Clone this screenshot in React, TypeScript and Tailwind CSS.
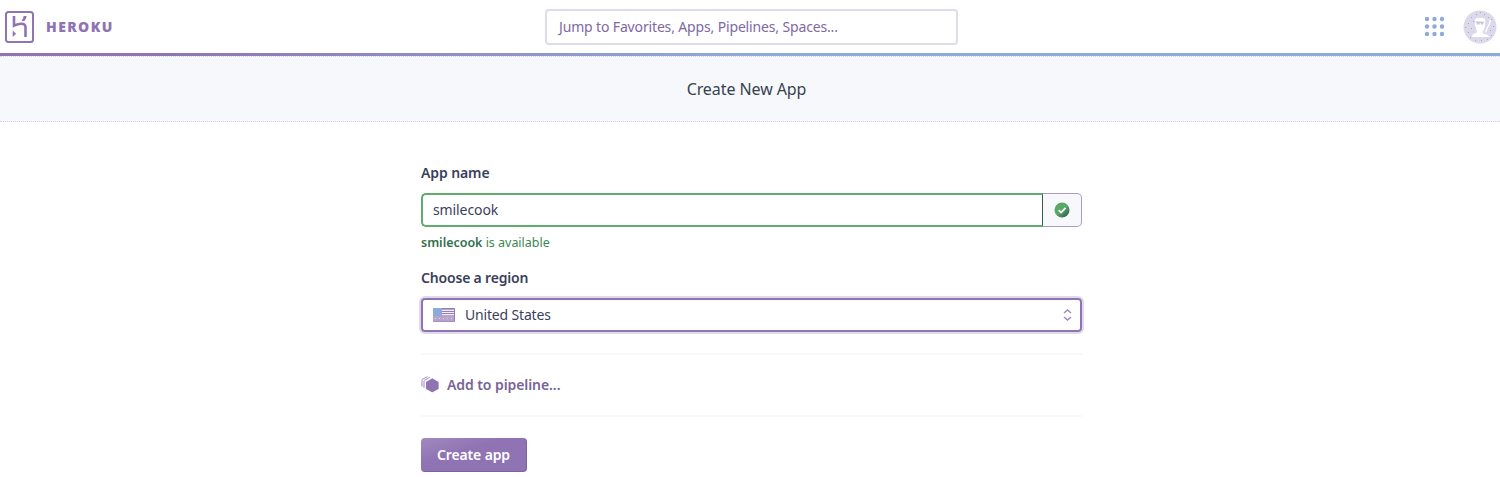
import React from "react";

function HerokuMark() {
  return (
    <svg width="29" height="32" viewBox="0 0 29 32" fill="none" className="shrink-0">
      <rect x="1" y="1" width="27" height="30" rx="2.5" stroke="#8f73b3" strokeWidth="2" />
      <path d="M9 5v9.600c2.600-1.200 4.800-1.900 7.400-1.900 3.300 0 4.100 1.600 4.100 3.600v9.700" stroke="#8f73b3" strokeWidth="2.600" />
      <path d="M21.600 5h-3c-.2 1.900-.9 3.500-2.200 5h2.900c1.300-1.500 2.100-3.100 2.300-5Z" fill="#8f73b3" />
      <path d="M7.700 19.600v6.400l3.400-3.200-3.400-3.200Z" fill="#8f73b3" />
    </svg>
  );
}

function GridIcon() {
  const steps = [3, 10.5, 18];
  return (
    <svg width="21" height="21" viewBox="0 0 21 21" fill="#8eaadb">
      {steps.map((y) => steps.map((x) => <circle key={`${x}-${y}`} cx={x} cy={y} r="2.2" />))}
    </svg>
  );
}

function Avatar() {
  const specks = [[8, 7], [13, 4], [21, 4], [28, 9], [5, 13], [8, 18], [5, 22], [27, 20], [30, 16], [12, 30], [18, 30], [24, 29], [17, 2], [25, 7], [10, 11], [2, 17], [28, 25], [7, 27]];
  return (
    <svg width="34" height="34" viewBox="0 0 34 34">
      <circle cx="17" cy="17" r="16.5" fill="#dcd9ea" />
      <path d="M12 9q5-2 9.500-.5l1 3.500-1 6-2 4 .5 1.500 5 1.500 1.500 2H9l.5-2.500 4.500-2-.5-3-1.500-4Z" fill="#fff" />
      <path d="M12.500 11.500H21v1.200h-.8v1.800h-2.500v-1.500h-1v1.500h-3v-1.800h-1.200Z" fill="#c9c6df" />
      <path d="m27.500 9.500-1 4-2.500 5-1.500 4" stroke="#fff" strokeWidth="1.300" fill="none" />
      <g fill="#aaa3d2">
        {specks.map(([x, y]) => (
          <rect key={`${x}-${y}`} x={x} y={y} width="1" height="1" />
        ))}
      </g>
    </svg>
  );
}

function Flag() {
  return (
    <svg width="22" height="14" viewBox="0 0 22 14">
      <rect width="22" height="14" rx="1" fill="#b7a4cc" />
      <path d="M9 2.500h12M9 4.500h12M9 6.500h12" stroke="#f2eff7" />
      <path d="M9 .500h12.500M9 3.500h12M9 5.500h12M21.500 1v12.500" stroke="#8f73b3" strokeWidth=".8" />
      <path d="M0 0h9v8H0Z" fill="#8eaadb" />
      <path d="M2 10.500h18" stroke="#d9d2e7" strokeDasharray="1 3" />
      <path d="M.500 13.500h21" stroke="#a48fc0" />
    </svg>
  );
}

function CheckBadge() {
  return (
    <svg width="16" height="16" viewBox="0 0 16 16">
      <defs>
        <linearGradient id="check-fill" x1="0.3" y1="0.2" x2="0.9" y2="0.9">
          <stop offset="0.4" stopColor="#58a866" />
          <stop offset="1" stopColor="#32604d" />
        </linearGradient>
      </defs>
      <circle cx="8" cy="8" r="7.500" fill="url(#check-fill)" />
      <path d="m4.700 8.200 2.400 2.300 4.400-4.600" stroke="#fff" strokeWidth="1.800" fill="none" />
    </svg>
  );
}

function PipelineIcon() {
  return (
    <svg width="19" height="17" viewBox="0 0 19 17" fill="none" className="shrink-0">
      <path d="M1 10.500V4.200Q1 3.500 1.600 3.200L6.500.6" stroke="#a18abe" />
      <path d="M3 12V5.200Q3 4.500 3.600 4.200L8.800 1.300" stroke="#a18abe" />
      <path d="M11.300 3 17 6.200v6.200l-5.700 3.200-5.700-3.200V6.200Z" fill="#8f73b3" stroke="#8f73b3" strokeWidth="1.300" strokeLinejoin="round" />
    </svg>
  );
}

export default function App() {
  return (
    <div className="flex h-[477px] w-full flex-col overflow-hidden bg-white font-['Noto_Sans','Open_Sans',sans-serif] text-[#3a3f5c]">
      <header className="grid h-[53px] shrink-0 grid-cols-[545px_413px_1fr] items-center">
        <div className="flex items-center gap-3 pl-[5px]">
          <HerokuMark />
          <span className="font-['Open_Sans'] text-[14px] leading-5 font-extrabold tracking-[1.4px] text-[#8f73b3]">HEROKU</span>
        </div>
        <div className="flex h-9 items-center rounded-[4px] border-2 border-[#dedbec] pl-[12px] text-[14px] tracking-[-0.15px] text-[#80699f]">
          Jump to Favorites, Apps, Pipelines, Spaces...
        </div>
        <div className="flex items-center justify-end gap-[18px] pr-[3px]">
          <GridIcon />
          <Avatar />
        </div>
      </header>
      <div className="h-[3px] shrink-0 bg-linear-to-r from-[#8f73b3] from-10% to-[#8eaadb] to-50%" />
      <div className="flex h-[66px] shrink-0 items-center justify-center border-t border-b border-dotted border-t-[#d9d8ea] border-b-[#d2cfe4] bg-[#f7f8fc] pr-[7px]">
        <h1 className="text-[16px] tracking-[-0.08px] text-[#36424f]">Create New App</h1>
      </div>
      <main className="ml-[421px] flex w-[661px] flex-col pt-[41px]">
        <label className="h-[30px] text-[14px] leading-5 font-semibold tracking-[-0.1px]">App name</label>
        <div className="flex h-[34px]">
          <div className="flex flex-1 items-center rounded-l-[5px] border-2 border-r border-[#5fac6c] border-r-[#32604d] pb-px pl-[10px] text-[14px] tracking-[-0.1px]">smilecook</div>
          <div className="flex w-[39px] items-center justify-center rounded-r-[5px] border border-l-0 border-[#ad9bc5] bg-[#f7f8fc]">
            <CheckBadge />
          </div>
        </div>
        <p className="mt-[6px] text-[12.5px] leading-5 tracking-[-0.02px] text-[#3c8552]">
          <span className="font-semibold text-[#32704d]">smilecook</span> is available
        </p>
        <label className="mt-[15px] text-[14px] leading-5 font-semibold tracking-[-0.18px]">Choose a region</label>
        <div className="mt-[10px] flex h-[34px] items-center rounded-[4px] border-2 border-[#8f73b3] pr-[8px] pl-[10px] text-[14px] tracking-[-0.17px] ring-2 ring-[#dedaeb]">
          <Flag />
          <span className="ml-[10px] flex-1 pb-[2px]">United States</span>
          <svg width="9" height="12" viewBox="0 0 9 12" fill="none" stroke="#a18abe" strokeWidth="1.500">
            <path d="m1 4 3.500-3L8 4M1 8l3.500 3L8 8" />
          </svg>
        </div>
        <div className="mt-[21px] flex h-[64px] items-center gap-[7px] border-t-2 border-b-2 border-[#f7f7fc] pb-[2px] text-[14px] font-semibold tracking-[-0.08px] text-[#796497]">
          <PipelineIcon />
          Add to pipeline...
        </div>
        <button className="mt-[21px] h-[34px] w-[106px] rounded-[4px] border-r border-b border-[#7b639c] bg-linear-to-br from-[#a18abe] to-[#8f73b3] to-40% pb-px text-[14px] font-semibold tracking-[-0.15px] text-white">
          Create app
        </button>
      </main>
    </div>
  );
}
